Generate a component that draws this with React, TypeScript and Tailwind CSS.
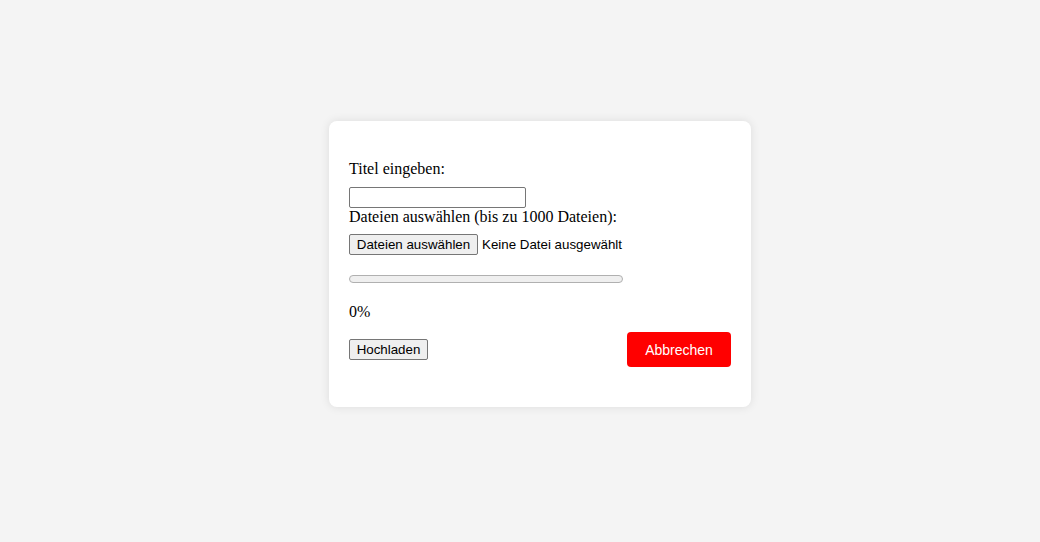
import React from 'react';

// Upload dialog — title, file picker, progress and actions
export default function App() {
    const progress = 0;

    return (
        <div className="min-h-[542px] bg-[#f4f4f4] pl-[329px] pt-[121px]">
            <div className="w-[422px] h-[286px] bg-white rounded-[8px] shadow-[0_0_10px_rgba(0,0,0,0.1)] px-[20px] pt-[39px] text-[16px] leading-[18px] text-black font-['Liberation_Serif',serif]">
                <label className="block">Titel eingeben:</label>
                <input
                    type="text"
                    className="mt-[9px] block w-[177px] h-[21px] border border-[#767676] rounded-[2px] bg-white px-[2px] text-[13.33px] font-['Liberation_Sans',sans-serif] outline-none"
                />
                <label className="block">Dateien auswählen (bis zu 1000 Dateien):</label>

                {/* file picker */}
                <div className="mt-[8px] flex items-center gap-[4px] font-['Liberation_Sans',sans-serif] text-[13.33px]">
                    <button className="h-[21px] w-[129px] bg-[#efefef] border border-[#767676] rounded-[2px] text-black leading-none">
                        Dateien auswählen
                    </button>
                    <span>Keine Datei ausgewählt</span>
                </div>

                {/* progress */}
                <div className="mt-[20px] w-[274px] h-[8px] rounded-full border border-[#b0b0b0] bg-[#efefef] overflow-hidden">
                    <div className="h-full bg-[#1a73e8]" style={{ width: `${progress}%` }} />
                </div>
                <p className="mt-[20px]">{progress}%</p>

                <div className="mt-[11px] flex items-center justify-between">
                    <button className="h-[21px] w-[79px] bg-[#efefef] border border-[#767676] rounded-[2px] text-black text-[13.33px] leading-none font-['Liberation_Sans',sans-serif]">
                        Hochladen
                    </button>
                    <button className="h-[35px] w-[104px] bg-[#ff0000] rounded-[4px] text-white text-[14px] font-['Liberation_Sans',sans-serif]">
                        Abbrechen
                    </button>
                </div>
            </div>
        </div>
    );
}
